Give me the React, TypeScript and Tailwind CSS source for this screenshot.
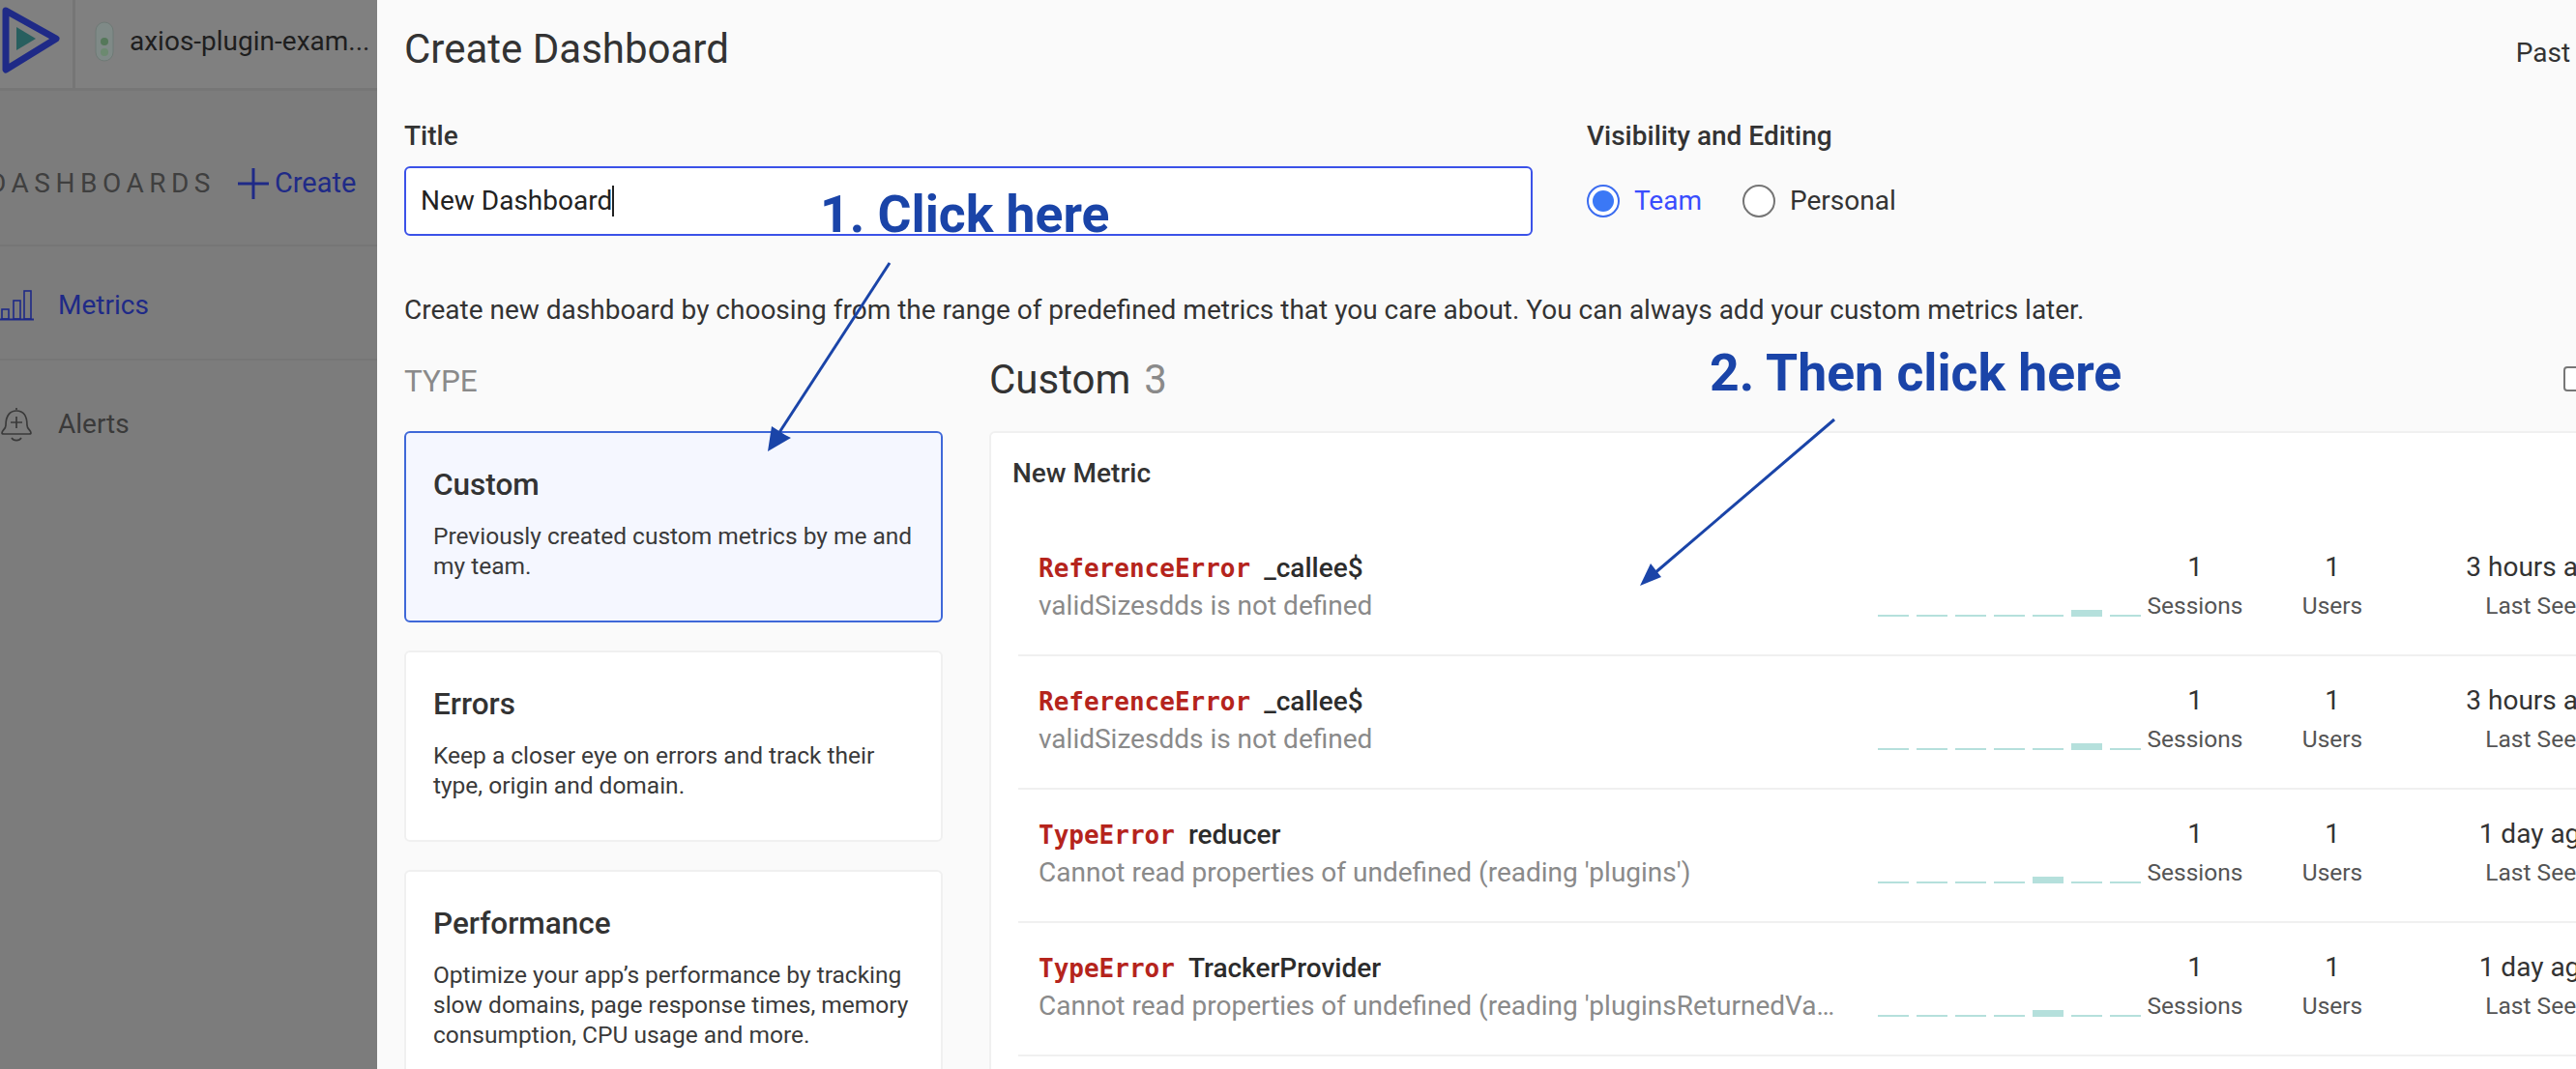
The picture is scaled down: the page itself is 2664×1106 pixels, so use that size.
import React from "react";

const errors = [
  { type: "ReferenceError", name: "_callee$", msg: "validSizesdds is not defined", peak: 5, seen: "3 hours ago" },
  { type: "ReferenceError", name: "_callee$", msg: "validSizesdds is not defined", peak: 5, seen: "3 hours ago" },
  { type: "TypeError", name: "reducer", msg: "Cannot read properties of undefined (reading 'plugins')", peak: 4, seen: "1 day ago" },
  { type: "TypeError", name: "TrackerProvider", msg: "Cannot read properties of undefined (reading 'pluginsReturnedValue')", peak: 4, seen: "1 day ago" },
];

const types = [
  { title: "Custom", desc: "Previously created custom metrics by me and my team.", active: true },
  { title: "Errors", desc: "Keep a closer eye on errors and track their type, origin and domain.", active: false },
  {
    title: "Performance",
    desc: "Optimize your app’s performance by tracking slow domains, page response times, memory consumption, CPU usage and more.",
    active: false,
  },
];

function Logo() {
  return (
    <svg width="64" height="72" viewBox="0 0 64 72" className="shrink-0">
      <path d="M6 5 L58 34 L6 66 Z" fill="none" stroke="#1f2a87" strokeWidth="7" strokeLinejoin="round" />
      <path d="M17 22 L37 34 L17 46 Z" fill="#285f5f" />
    </svg>
  );
}

function ProjectDot() {
  return (
    <svg width="20" height="42" viewBox="0 0 20 42" className="shrink-0">
      <rect x="1" y="1" width="18" height="40" rx="9" fill="#7f8a87" stroke="#6f7a76" />
      <circle cx="10" cy="21" r="4" fill="#55785a" />
      <circle cx="10" cy="32" r="4" fill="#6c8a70" />
    </svg>
  );
}

function BarsIcon() {
  return (
    <svg width="36" height="32" viewBox="0 0 36 32" fill="none" stroke="#1f2a87" strokeWidth="1.6" className="shrink-0">
      <path d="M0 30.5 H35" strokeWidth="2" />
      <rect x="2" y="20" width="7" height="10" />
      <rect x="14" y="11" width="7" height="19" />
      <rect x="25" y="1" width="7" height="29" />
    </svg>
  );
}

function BellIcon() {
  return (
    <svg width="32" height="36" viewBox="0 0 32 36" fill="none" stroke="#3a3a3a" strokeWidth="1.7" className="shrink-0">
      <path d="M16 1 V3 M5 19 C5 8 10 4 16 4 C22 4 27 8 27 19 C27 23 31 24 31 27 C31 28 30 28 29 28 H3 C2 28 1 28 1 27 C1 24 5 23 5 19 Z" />
      <path d="M16 10 V22 M10 16 H22" />
      <path d="M11 32 C13 35.5 19 35.5 21 32" />
    </svg>
  );
}

function Sidebar() {
  return (
    <aside className="w-[390px] shrink-0 bg-[#7c7c7c] text-[#3a3a3a] overflow-hidden">
      <div className="h-[94px] flex items-center bg-[#808080] border-b-[3px] border-[#767676]">
        <div className="w-[78px] h-full flex items-center shrink-0 border-r-[3px] border-[#767676] pb-[8px]">
          <Logo />
        </div>
        <div className="flex items-center gap-[16px] pl-[20px] pb-[6px]">
          <ProjectDot />
          <span className="text-[28px] text-[#1e1e1e] whitespace-nowrap">axios-plugin-exam...</span>
        </div>
      </div>
      <div className="h-[161px] flex items-center border-b-2 border-[#767676] -ml-[12px] pt-[32px]">
        <span className="text-[28px] tracking-[5.5px] whitespace-nowrap text-[#3f3f3f]">DASHBOARDS</span>
        <svg width="32" height="32" viewBox="0 0 32 32" className="ml-[23px] shrink-0" stroke="#1f2a87" strokeWidth="3">
          <path d="M16 0 V32 M0 16 H32" />
        </svg>
        <span className="text-[29px] text-[#1f2a87] ml-[6px]">Create</span>
      </div>
      <div className="h-[118px] flex items-center gap-[24px] border-b-2 border-[#767676] pt-[5px]">
        <BarsIcon />
        <span className="text-[28px] text-[#1f2a87]">Metrics</span>
      </div>
      <div className="h-[132px] flex items-center gap-[27px] pl-[1px]">
        <BellIcon />
        <span className="text-[28px]">Alerts</span>
      </div>
    </aside>
  );
}

function Radio({ label, checked }: { label: string; checked: boolean }) {
  return (
    <div className="flex items-center gap-[15px]">
      <span
        className={`w-[34px] h-[34px] rounded-full flex items-center justify-center border-2 ${
          checked ? "border-[#3b6cf0] bg-white" : "border-[#757575] bg-white"
        }`}
      >
        {checked && <span className="w-[22px] h-[22px] rounded-full bg-[#3b78f6]" />}
      </span>
      <span className={`text-[28px] ${checked ? "text-[#394dfe]" : "text-[#333333]"}`}>{label}</span>
    </div>
  );
}

function TypeCard({ title, desc, active }: { title: string; desc: string; active: boolean }) {
  return (
    <div
      className={`min-h-[198px] shrink-0 rounded-[6px] border-2 px-[28px] pt-[34px] pb-[36px] ${
        active ? "border-[#3f68d8] bg-[#f5f7ff]" : "border-[#f0f0f0] bg-white"
      }`}
    >
      <div className="text-[31.5px] leading-[40px] font-medium text-[#333333]">{title}</div>
      <p className="mt-[17px] text-[24.5px] leading-[31px] text-[#3a3a3a]">{desc}</p>
    </div>
  );
}

function Sparkline({ peak }: { peak: number }) {
  return (
    <div className="w-[272px] shrink-0 flex items-end gap-[8px] h-[10px] mt-[52px]">
      {[0, 1, 2, 3, 4, 5, 6].map((i) => (
        <div key={i} className={`w-[32px] bg-[#b5e0dc] ${i === peak ? "h-[7px]" : "h-[2px]"}`} />
      ))}
    </div>
  );
}

function ErrorRow({ type, name, msg, peak, seen }: (typeof errors)[number]) {
  return (
    <div className="h-[138px] flex items-center pl-[21px] border-b-2 border-[#f0f0f0] pb-[4px]">
      <div className="w-[868px] shrink-0">
        <div className="flex items-baseline gap-[14px] h-[40px]">
          <span className="text-[26px] font-bold text-[#b5241c] font-['DejaVu_Sans_Mono',monospace]">{type}</span>
          <span className="text-[28px] font-medium text-[#2c2c2c]">{name}</span>
        </div>
        <div className="w-[825px] truncate text-[28px] leading-[40px] text-[#8a8a8a]">{msg}</div>
      </div>
      <Sparkline peak={peak} />
      <div className="w-[112px] shrink-0 text-center text-[#333333]">
        <div className="text-[28px] leading-[40px]">1</div>
        <div className="text-[24.5px] leading-[40px] text-[#555555]">Sessions</div>
      </div>
      <div className="w-[172px] shrink-0 text-center text-[#333333]">
        <div className="text-[28px] leading-[40px]">1</div>
        <div className="text-[24.5px] leading-[40px] text-[#555555]">Users</div>
      </div>
      <div className="w-[252px] shrink-0 text-center text-[#333333]">
        <div className="text-[28px] leading-[40px] whitespace-nowrap">{seen}</div>
        <div className="text-[24.5px] leading-[40px] text-[#555555] whitespace-nowrap">Last Seen</div>
      </div>
    </div>
  );
}

function Annotations() {
  return (
    <>
      <div className="absolute left-[848px] top-[192px] text-[53.5px] leading-[60px] font-bold text-[#1a44a8] whitespace-nowrap">
        1. Click here
      </div>
      <div className="absolute left-[1768px] top-[356px] text-[53.5px] leading-[60px] font-bold text-[#1a44a8] whitespace-nowrap">
        2. Then click here
      </div>
      <svg className="absolute inset-0 pointer-events-none" width="2664" height="1106" viewBox="0 0 2664 1106">
        <path d="M920 272 L803 452" stroke="#1a44a8" strokeWidth="3" fill="none" />
        <path d="M794 467 L798 441 L812 450 L818 453 Z" fill="#1a44a8" />
        <path d="M1897 434 L1710 594" stroke="#1a44a8" strokeWidth="3" fill="none" />
        <path d="M1696 606 L1707 583 L1718 597 Z" fill="#1a44a8" />
      </svg>
    </>
  );
}

export default function App() {
  return (
    <div className="relative h-screen w-full flex overflow-hidden bg-[#fafafa] font-['Roboto',sans-serif] text-[#333333]">
      <Sidebar />
      <main className="flex-1 min-w-0 overflow-hidden pl-[28px] pt-[26px]">
        <div className="flex items-center gap-[1848px] h-[50px]">
          <h1 className="text-[42px] leading-[50px] whitespace-nowrap text-[#333333]">Create Dashboard</h1>
          <span className="text-[28px] whitespace-nowrap pt-[8px]">Past 7 Days</span>
        </div>

        <div className="flex mt-[45px]">
          <div className="w-[1167px] shrink-0">
            <label className="block text-[28px] leading-[40px] font-medium">Title</label>
            <div className="mt-[11px] h-[72px] rounded-[6px] border-2 border-[#3b52e8] bg-white flex items-center px-[15px] text-[28px] text-[#222222]">
              New Dashboard
              <span className="w-[2px] h-[32px] bg-[#222222]" />
            </div>
          </div>
          <div className="ml-[56px]">
            <div className="text-[28px] leading-[40px] font-medium whitespace-nowrap">Visibility and Editing</div>
            <div className="mt-[11px] h-[72px] flex items-center gap-[42px]">
              <Radio label="Team" checked />
              <Radio label="Personal" checked={false} />
            </div>
          </div>
        </div>

        <p className="mt-[57px] text-[28px] leading-[40px] whitespace-nowrap">
          Create new dashboard by choosing from the range of predefined metrics that you care about. You can always add your custom metrics later.
        </p>

        <div className="flex gap-[48px] mt-[26px]">
          <div className="w-[557px] shrink-0">
            <div className="h-[56px] flex items-center text-[31.5px] text-[#8a8a8a]">TYPE</div>
            <div className="mt-[23px] flex flex-col gap-[29px]">
              {types.map((t) => (
                <TypeCard key={t.title} {...t} />
              ))}
            </div>
          </div>

          <div className="w-[1800px] shrink-0">
            <div className="h-[56px] flex items-center text-[42px] pb-[6px]">
              <span>Custom</span>
              <span className="ml-[14px] text-[#8a8a8a]">3</span>
              <span className="ml-[1444px] w-[26px] h-[26px] shrink-0 rounded-[4px] border-2 border-[#777777] bg-white" />
            </div>
            <div className="mt-[23px] rounded-[6px] border-2 border-[#f0f0f0] bg-white pl-[28px] pb-[40px]">
              <div className="h-[93px] flex items-center -ml-[6px] pb-[10px] text-[28px] font-medium">New Metric</div>
              {errors.map((e, i) => (
                <ErrorRow key={i} {...e} />
              ))}
            </div>
          </div>
        </div>
      </main>
      <Annotations />
    </div>
  );
}
